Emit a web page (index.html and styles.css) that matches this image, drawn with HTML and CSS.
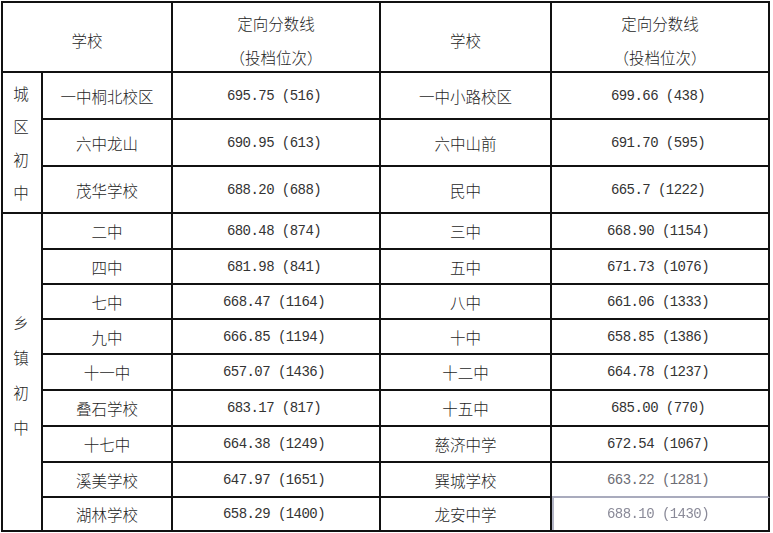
FILE: index.html
```html
<!DOCTYPE html>
<html lang="zh">
<head>
<meta charset="utf-8">
<title>定向分数线</title>
<link rel="stylesheet" href="styles.css">
</head>
<body>
<div class="sheet">
  <div class="c h span2">学校</div>
  <div class="c h two"><span>定向分数线</span><span>（投档位次）</span></div>
  <div class="c h">学校</div>
  <div class="c h two"><span>定向分数线</span><span>（投档位次）</span></div>

  <div class="c cat city"><span class="v">城区初中</span></div>
  <div class="c">一中桐北校区</div><div class="c num">695.75 (516)</div><div class="c">一中小路校区</div><div class="c num">699.66 (438)</div>
  <div class="c">六中龙山</div><div class="c num">690.95 (613)</div><div class="c">六中山前</div><div class="c num">691.70 (595)</div>
  <div class="c">茂华学校</div><div class="c num">688.20 (688)</div><div class="c">民中</div><div class="c num">665.7 (1222)</div>

  <div class="c cat town"><span class="v">乡镇初中</span></div>
  <div class="c">二中</div><div class="c num">680.48 (874)</div><div class="c">三中</div><div class="c num">668.90 (1154)</div>
  <div class="c">四中</div><div class="c num">681.98 (841)</div><div class="c">五中</div><div class="c num">671.73 (1076)</div>
  <div class="c">七中</div><div class="c num">668.47 (1164)</div><div class="c">八中</div><div class="c num">661.06 (1333)</div>
  <div class="c">九中</div><div class="c num">666.85 (1194)</div><div class="c">十中</div><div class="c num">658.85 (1386)</div>
  <div class="c">十一中</div><div class="c num">657.07 (1436)</div><div class="c">十二中</div><div class="c num">664.78 (1237)</div>
  <div class="c">叠石学校</div><div class="c num">683.17 (817)</div><div class="c">十五中</div><div class="c num">685.00 (770)</div>
  <div class="c">十七中</div><div class="c num">664.38 (1249)</div><div class="c">慈济中学</div><div class="c num">672.54 (1067)</div>
  <div class="c">溪美学校</div><div class="c num">647.97 (1651)</div><div class="c">巽城学校</div><div class="c num faint wm-b">663.22 (1281)</div>
  <div class="c">湖林学校</div><div class="c num">658.29 (1400)</div><div class="c">龙安中学</div><div class="c num blur wm-l">688.10 (1430)</div>
</div>
</body>
</html>
```

FILE: styles.css
```css
html, body {
  margin: 0;
  padding: 0;
  background: #ffffff;
}

body {
  width: 773px;
  height: 533px;
  overflow: hidden;
  font-family: "Noto Sans CJK SC", "Noto Sans", sans-serif;
  font-size: 15.5px;
  color: #1e1e1e;
}

.sheet {
  margin: 1px 0 0 1px;
  display: grid;
  grid-template-columns: 40px 130px 208px 171px 218px;
  grid-template-rows: 70px 47px 47px 47px 36px 35px 35px 35px 36px 36px 36px 35px 34px;
  border-left: 2px solid #111;
  border-top: 2px solid #111;
  width: max-content;
}

.c {
  box-sizing: border-box;
  border-right: 2px solid #111;
  border-bottom: 2px solid #111;
  display: flex;
  align-items: center;
  justify-content: center;
  text-align: center;
  font-weight: 300;
  white-space: pre;
}

.h {
  padding-top: 6px;
}

.span2 {
  grid-column: span 2;
}

.two {
  flex-direction: column;
  line-height: 34px;
}

.num {
  font-family: "Liberation Mono", "DejaVu Sans Mono", monospace;
  font-size: 14px;
  letter-spacing: -0.55px;
  color: #333333;
  padding-right: 4px;
}

.city {
  grid-row: span 3;
}

.town {
  grid-row: span 9;
}

.v {
  display: block;
  width: 1em;
  white-space: normal;
  word-break: break-all;
  margin-left: -2px;
}

.city .v {
  line-height: 33px;
}

.town .v {
  line-height: 35px;
  padding-top: 6px;
}

.faint {
  color: #6c6c74;
}

.blur {
  color: #8a8a98;
  filter: blur(0.6px);
}

.wm-b {
  border-bottom-color: #a9abbd;
}

.wm-l {
  box-shadow: inset 2px 0 0 #b4b6c6;
}
```
